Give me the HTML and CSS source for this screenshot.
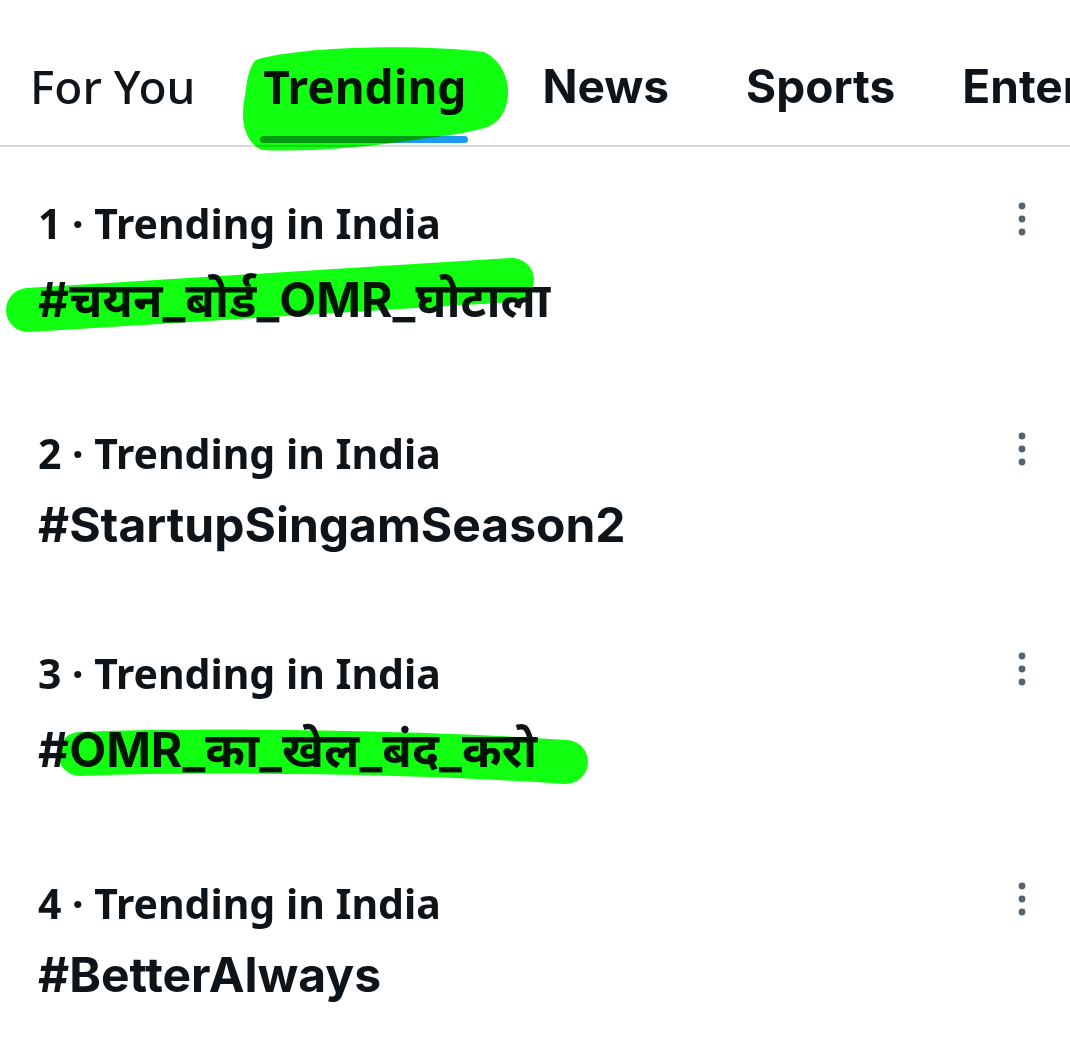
FILE: index.html
```html
<!DOCTYPE html>
<html lang="en">
<head>
<meta charset="utf-8">
<title>Trending</title>
<link rel="stylesheet" href="styles.css">
</head>
<body>
<div class="page">
  <nav class="tabs">
    <div class="tab tab-foryou">For You</div>
    <div class="tab tab-active">Trending<span class="underline"></span></div>
    <div class="tab tab-bold tab-news">News</div>
    <div class="tab tab-bold tab-sports">Sports</div>
    <div class="tab tab-bold tab-ent">Entertainment</div>
  </nav>
  <ul class="list">
    <li class="item">
      <div class="meta">1 · Trending in India</div>
      <div class="tag tag-deva">#चयन_बोर्ड_OMR_घोटाला</div>
      <svg class="more" viewBox="0 0 10 40" width="10" height="40"><circle cx="5" cy="7" r="3.4"/><circle cx="5" cy="20" r="3.4"/><circle cx="5" cy="33" r="3.4"/></svg>
    </li>
    <li class="item">
      <div class="meta">2 · Trending in India</div>
      <div class="tag">#StartupSingamSeason2</div>
      <svg class="more" viewBox="0 0 10 40" width="10" height="40"><circle cx="5" cy="7" r="3.4"/><circle cx="5" cy="20" r="3.4"/><circle cx="5" cy="33" r="3.4"/></svg>
    </li>
    <li class="item">
      <div class="meta">3 · Trending in India</div>
      <div class="tag tag-deva">#OMR_का_खेल_बंद_करो</div>
      <svg class="more" viewBox="0 0 10 40" width="10" height="40"><circle cx="5" cy="7" r="3.4"/><circle cx="5" cy="20" r="3.4"/><circle cx="5" cy="33" r="3.4"/></svg>
    </li>
    <li class="item">
      <div class="meta">4 · Trending in India</div>
      <div class="tag">#BetterAlways</div>
      <svg class="more" viewBox="0 0 10 40" width="10" height="40"><circle cx="5" cy="7" r="3.4"/><circle cx="5" cy="20" r="3.4"/><circle cx="5" cy="33" r="3.4"/></svg>
    </li>
  </ul>
  <svg class="marker" viewBox="0 0 1070 1059" width="1070" height="1059" aria-hidden="true">
    <path class="ink" d="M256 60 C300 46 420 44 484 52 C514 66 516 112 490 126 C468 134 440 136 400 142 C360 148 300 152 262 150 C244 142 240 120 245 96 C247 80 249 66 256 60 Z"/>
    <path class="stroke" d="M28 310 C150 302 300 293 512 280" stroke-width="44"/>
    <path class="stroke" d="M80 754 C220 749 420 752 566 762" stroke-width="44"/>
  </svg>
</div>
</body>
</html>
```
FILE: styles.css
```css
* { box-sizing: border-box; }
html, body { margin: 0; padding: 0; background: #ffffff; }
.page {
  position: relative;
  width: 1070px;
  height: 1059px;
  overflow: hidden;
  color: #0f1419;
}
.tabs {
  display: flex;
  align-items: flex-start;
  height: 147px;
  border-bottom: 2px solid #d4d9dc;
  padding-left: 30px;
  padding-top: 58px;
  white-space: nowrap;
}
.tab {
  position: relative;
  font-size: 46px;
  line-height: 56px;
  flex-shrink: 0;
}
.tab-foryou {
  font-family: "Noto Sans", "Open Sans", sans-serif;
  font-weight: 500;
}
.tab-active {
  font-family: "Noto Sans", "Open Sans", sans-serif;
  font-weight: 700;
  margin-left: 68px;
}
.tab-bold {
  font-family: Inter, "Liberation Sans", sans-serif;
  font-weight: 700;
}
.tab-news { margin-left: 76px; }
.tab-sports { margin-left: 77px; }
.tab-ent { margin-left: 67px; }
.underline {
  position: absolute;
  left: -3px;
  right: -2px;
  top: 78px;
  height: 7px;
  border-radius: 4px;
  background: #1d9bf0;
}
.list {
  list-style: none;
  margin: 0;
  padding: 0;
}
.item {
  position: relative;
  padding: 50px 0 44px 38px;
}
.meta {
  font-family: "Noto Sans", "Open Sans", sans-serif;
  font-weight: 700;
  font-size: 41px;
  line-height: 52px;
}
.tag {
  font-family: Inter, "Noto Sans", "Noto Sans Devanagari", sans-serif;
  font-weight: 700;
  font-size: 48px;
  line-height: 56px;
  margin-top: 18px;
}
.tag-deva {
  line-height: 66px;
}
.more {
  position: absolute;
  right: 43px;
  top: 52px;
  fill: #536471;
}
.marker {
  position: absolute;
  left: 0;
  top: 0;
  pointer-events: none;
  mix-blend-mode: multiply;
}
.ink { fill: #11ff11; }
.stroke {
  fill: none;
  stroke: #11ff11;
  stroke-linecap: round;
}
```
